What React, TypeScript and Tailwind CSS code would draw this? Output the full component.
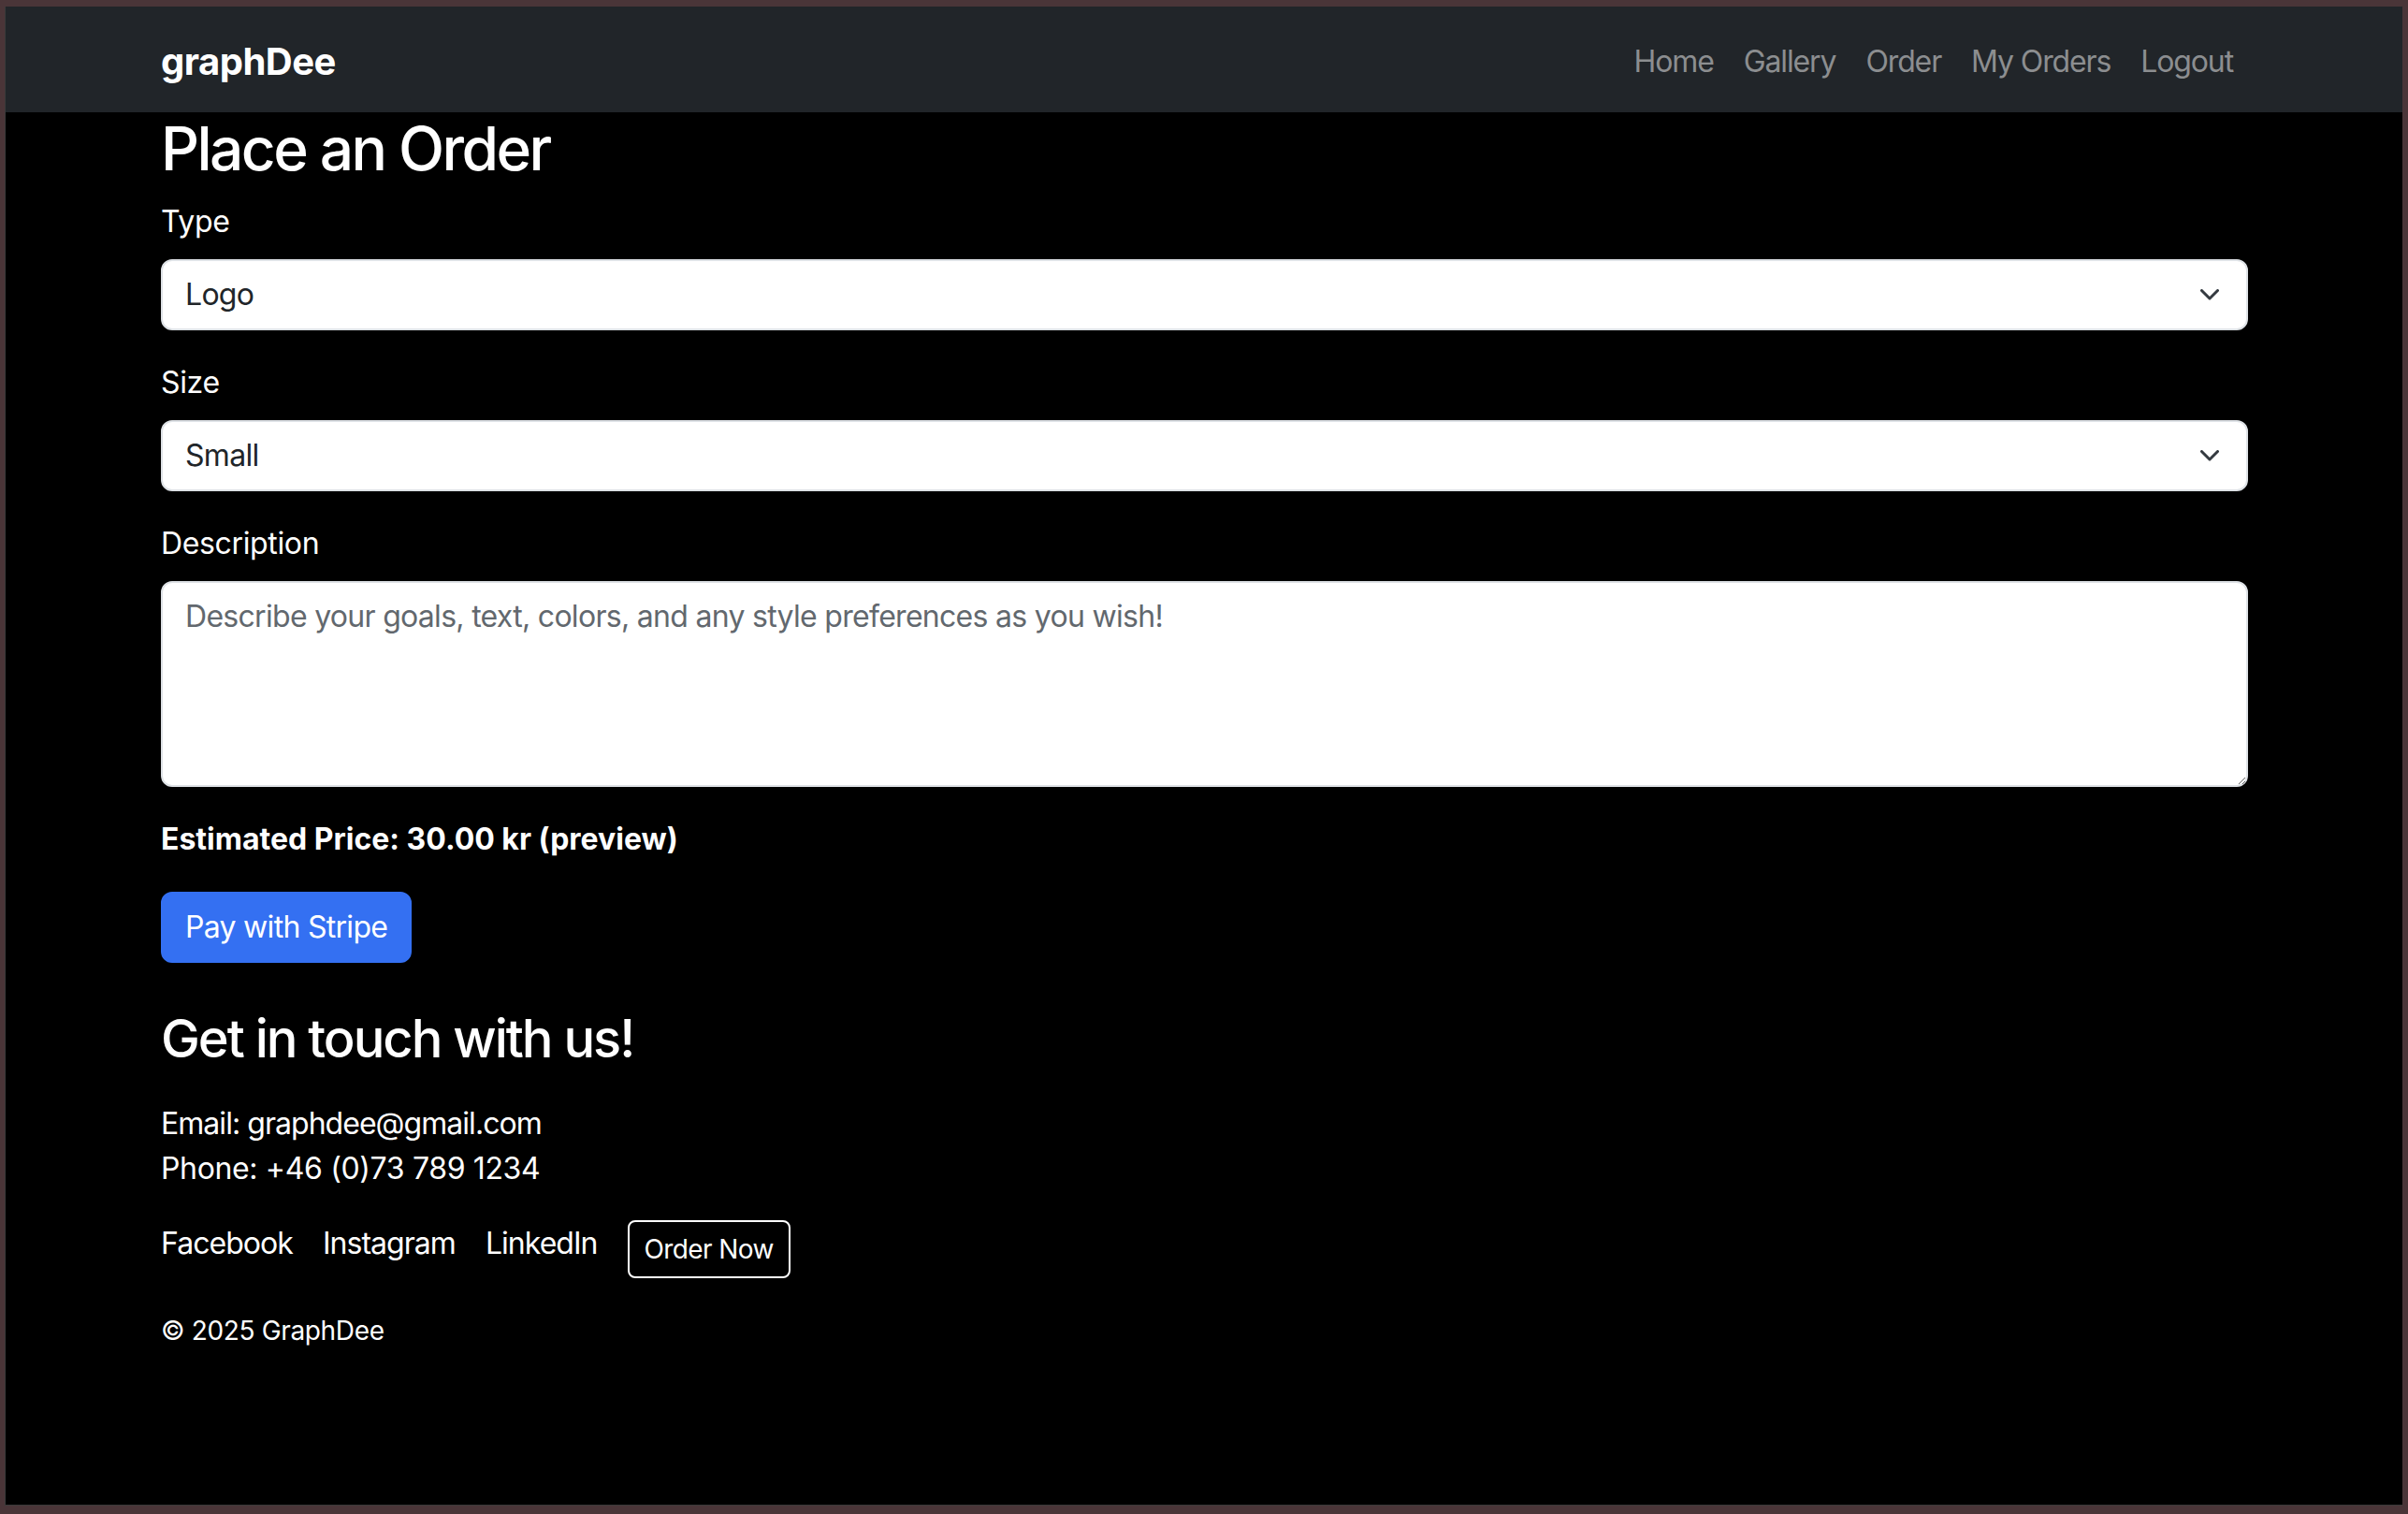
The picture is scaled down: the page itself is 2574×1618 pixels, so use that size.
import { useState } from "react"

const navLinks = ["Home", "Gallery", "Order", "My Orders", "Logout"]

function Chevron() {
  return (
    <svg
      className="pointer-events-none absolute right-[31px] top-1/2 -translate-y-1/2"
      width="20"
      height="12"
      viewBox="0 0 20 12"
      fill="none"
    >
      <path d="M1.5 1.5 10 10l8.5-8.5" stroke="#343a40" strokeWidth="3" strokeLinecap="round" strokeLinejoin="round" />
    </svg>
  )
}

function SelectField({
  label,
  value,
  options,
  onChange,
}: {
  label: string
  value: string
  options: string[]
  onChange: (v: string) => void
}) {
  return (
    <div className="mb-[32px]">
      <label className="mb-[16px] block text-[32px] leading-[48px]">{label}</label>
      <div className="relative">
        <select
          value={value}
          onChange={(e) => onChange(e.target.value)}
          className="block h-[76px] w-full appearance-none rounded-[12px] border-2 border-[#dee2e6] bg-white px-[24px] text-[32px] leading-[48px] tracking-[-0.022em] text-[#212529] outline-none"
        >
          {options.map((o) => (
            <option key={o} value={o}>
              {o}
            </option>
          ))}
        </select>
        <Chevron />
      </div>
    </div>
  )
}

export default function App() {
  const [type, setType] = useState("Logo")
  const [size, setSize] = useState("Small")
  const [description, setDescription] = useState("")

  return (
    <div
      className="flex h-screen flex-col bg-[#4a3538] pb-[9px] pl-[5px] pr-[6px] pt-[7px] tracking-[-0.022em]"
      style={{ fontFamily: "Inter, 'Noto Sans', sans-serif" }}
    >
      <div className="flex flex-1 flex-col overflow-hidden border-b border-l border-[#3a3a3a] bg-black text-white">
        <nav className="h-[113px] shrink-0 bg-[#212529]">
          <div className="mx-auto flex h-full w-[2280px] items-center justify-between px-[24px]">
            <span className="pl-[1px] pt-[4px] text-[40px] font-bold tracking-[-0.5px] text-white">graphDee</span>
            <ul className="flex items-center pt-[4px]">
              {navLinks.map((link) => (
                <li key={link} className="px-[16px] text-[32px] leading-[48px] tracking-[-0.035em] text-[#8c8e90]">
                  {link}
                </li>
              ))}
            </ul>
          </div>
        </nav>

        <main className="mx-auto w-[2280px] pl-[25px] pr-[24px]">
          <h2 className="mb-[16px] text-[64px] font-medium leading-[77px] tracking-[-0.04em]">Place an Order</h2>

          <form onSubmit={(e) => e.preventDefault()}>
            <SelectField label="Type" value={type} options={["Logo", "Poster", "Illustration"]} onChange={setType} />
            <SelectField label="Size" value={size} options={["Small", "Medium", "Large"]} onChange={setSize} />

            <div className="mb-[32px]">
              <label className="mb-[16px] block text-[32px] leading-[48px]">Description</label>
              <textarea
                value={description}
                onChange={(e) => setDescription(e.target.value)}
                placeholder="Describe your goals, text, colors, and any style preferences as you wish!"
                className="block h-[220px] w-full rounded-[12px] border-2 border-[#dee2e6] bg-white px-[24px] py-[12px] text-[32px] leading-[48px] tracking-[-0.022em] text-[#212529] outline-none placeholder:text-[#62686e]"
              />
            </div>

            <p className="mb-[32px] text-[32px] font-bold leading-[48px] tracking-normal">Estimated Price: 30.00 kr (preview)</p>

            <button
              type="submit"
              className="h-[76px] rounded-[12px] border-2 border-[#3470f2] bg-[#3470f2] px-[24px] text-[32px] leading-[48px] tracking-[-0.022em] text-white"
            >
              Pay with Stripe
            </button>
          </form>

          <footer className="mt-[48px]">
            <h3 className="mb-[33px] text-[56px] font-medium leading-[67px] tracking-[-0.036em]">Get in touch with us!</h3>
            <p className="text-[32px] leading-[48px] tracking-[-0.03em]">Email: graphdee@gmail.com</p>
            <p className="mb-[31px] text-[32px] leading-[48px]">Phone: +46 (0)73 789 1234</p>
            <div className="flex items-start">
              <a className="mr-[32px] pt-[1px] text-[32px] leading-[48px] tracking-[-0.03em] text-white">Facebook</a>
              <a className="mr-[32px] pt-[1px] text-[32px] leading-[48px] tracking-[-0.03em] text-white">Instagram</a>
              <a className="mr-[32px] pt-[1px] text-[32px] leading-[48px] tracking-[-0.03em] text-white">LinkedIn</a>
              <button className="h-[62px] rounded-[8px] border-2 border-white px-[16px] text-[28px] leading-[42px] tracking-[-0.022em] text-white">
                Order Now
              </button>
            </div>
            <p className="mt-[32px] text-[28px] leading-[48px]">© 2025 GraphDee</p>
          </footer>
        </main>
      </div>
    </div>
  )
}
